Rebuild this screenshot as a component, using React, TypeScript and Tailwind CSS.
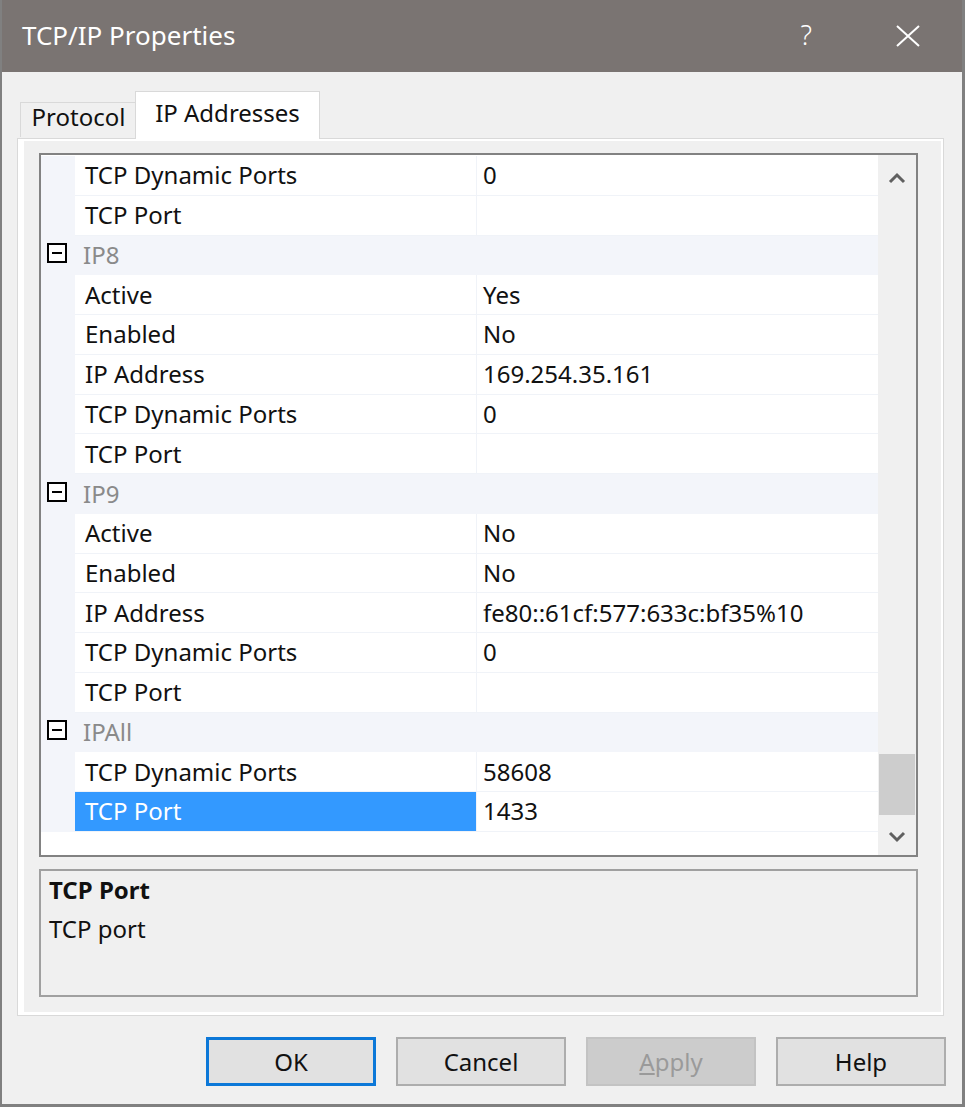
import React from "react";

type Row =
  | { kind: "cat"; label: string }
  | { kind: "prop"; name: string; value: string; selected?: boolean };

const rows: Row[] = [
  { kind: "prop", name: "TCP Dynamic Ports", value: "0" },
  { kind: "prop", name: "TCP Port", value: "" },
  { kind: "cat", label: "IP8" },
  { kind: "prop", name: "Active", value: "Yes" },
  { kind: "prop", name: "Enabled", value: "No" },
  { kind: "prop", name: "IP Address", value: "169.254.35.161" },
  { kind: "prop", name: "TCP Dynamic Ports", value: "0" },
  { kind: "prop", name: "TCP Port", value: "" },
  { kind: "cat", label: "IP9" },
  { kind: "prop", name: "Active", value: "No" },
  { kind: "prop", name: "Enabled", value: "No" },
  { kind: "prop", name: "IP Address", value: "fe80::61cf:577:633c:bf35%10" },
  { kind: "prop", name: "TCP Dynamic Ports", value: "0" },
  { kind: "prop", name: "TCP Port", value: "" },
  { kind: "cat", label: "IPAll" },
  { kind: "prop", name: "TCP Dynamic Ports", value: "58608" },
  { kind: "prop", name: "TCP Port", value: "1433", selected: true },
];

function Expander() {
  return (
    <div className="w-[20px] h-[20px] border-2 border-[#000] bg-white flex items-center justify-center">
      <div className="w-[10px] h-[2px] bg-[#000]" />
    </div>
  );
}

function GridRow({ row }: { row: Row }) {
  if (row.kind === "cat") {
    return (
      <div className="flex h-[39.75px] bg-[#f3f5fa]">
        <div className="w-[34px] flex items-center justify-center pr-[2px] pb-[4px]">
          <Expander />
        </div>
        <div className="flex-1 flex items-center pl-[8px] text-[#8a8a8a]">{row.label}</div>
      </div>
    );
  }
  return (
    <div className="flex h-[39.75px]">
      <div className="w-[34px] bg-[#f3f5fa]" />
      <div
        className={
          row.selected
            ? "w-[401px] flex items-center pl-[10px] bg-[#3399ff] text-white border-b border-[#f0f3f8]"
            : "w-[401px] flex items-center pl-[10px] bg-white text-[#111] border-b border-[#f0f3f8]"
        }
      >
        {row.name}
      </div>
      <div className="flex-1 flex items-center pl-[6px] bg-white text-[#111] border-l border-b border-[#f0f3f8]">
        {row.value}
      </div>
    </div>
  );
}

function Chevron({ up }: { up?: boolean }) {
  return (
    <svg width="18" height="12" viewBox="0 0 18 12">
      <path
        d={up ? "M2 10 L9 3 L16 10" : "M2 2 L9 9 L16 2"}
        fill="none"
        stroke="#606060"
        strokeWidth="3"
      />
    </svg>
  );
}

function Button({
  label,
  variant,
}: {
  label: React.ReactNode;
  variant?: "default" | "disabled";
}) {
  const cls =
    variant === "default"
      ? "w-[170px] h-[49px] flex items-center justify-center bg-[#e1e1e1] border-[3px] border-[#0c78d8] text-[#111]"
      : variant === "disabled"
      ? "w-[170px] h-[49px] flex items-center justify-center bg-[#cccccc] border-2 border-[#c3c3c3] text-[#9a9a9a]"
      : "w-[170px] h-[49px] flex items-center justify-center bg-[#e1e1e1] border-2 border-[#adadad] text-[#111]";
  return <div className={cls}>{label}</div>;
}

export default function App() {
  return (
    <div
      className="w-[965px] h-[1107px] flex flex-col bg-[#f0f0f0] border-l-2 border-r-[3px] border-b-[3px] border-[#808080] text-[24px] leading-none overflow-hidden"
      style={{ fontFamily: '"Noto Sans", "DejaVu Sans", sans-serif' }}
    >
      {/* Title bar */}
      <div className="h-[72px] shrink-0 bg-[#7a7472] flex items-center text-white">
        <div className="pl-[20px] text-[26px] pb-[2px]">TCP/IP Properties</div>
        <div className="ml-auto flex items-center">
          <div className="text-[27px] font-light pb-[4px] mr-[84px]">?</div>
          <svg width="24" height="22" viewBox="0 0 24 22" className="mr-[42px]">
            <path d="M1 1 L23 21 M23 1 L1 21" stroke="white" strokeWidth="2" />
          </svg>
        </div>
      </div>

      {/* Tabs */}
      <div className="flex items-end pl-[18px] mt-[19px] h-[47px] shrink-0 relative z-10">
        <div className="w-[117px] h-[35px] border border-b-0 border-[#d9d9d9] bg-[#f0f0f0] flex items-end justify-center pb-[8px] text-[#111] mb-[1px]">
          Protocol
        </div>
        <div className="w-[185px] h-[48px] -ml-[2px] -mb-[1px] border border-b-0 border-[#d9d9d9] bg-white flex items-end justify-center pb-[14px] text-[#111]">
          IP Addresses
        </div>
      </div>

      {/* Tab panel */}
      <div className="ml-[15px] w-[927px] h-[878px] border border-[#d9d9d9] bg-white">
        <div className="w-full h-full bg-[#f0f0f0] border-l-[6px] border-t-[2px] border-r-[2px] border-b-[3px] border-white pl-[15px] pt-[12px]">
          {/* Property grid */}
          <div className="w-[879px] h-[704px] border-2 border-[#828282] flex bg-white">
            <div className="flex-1 flex flex-col pt-[1px]">
              {rows.map((r, i) => (
                <GridRow key={i} row={r} />
              ))}
            </div>
            <div className="w-[38px] bg-[#f0f0f0] flex flex-col items-center">
              <div className="h-[44px] flex items-center justify-center pt-[2px]">
                <Chevron up />
              </div>
              <div className="flex-1" />
              <div className="w-[36px] h-[61px] bg-[#cdcdcd] mb-[10px]" />
              <div className="h-[24px] flex items-center justify-center mb-[6px]">
                <Chevron />
              </div>
            </div>
          </div>

          {/* Description */}
          <div className="mt-[12px] w-[879px] h-[128px] border-2 border-[#a0a0a0] bg-[#f0f0f0] pl-[8px] pt-[7px] text-[#111]">
            <div className="font-bold">TCP Port</div>
            <div className="mt-[15px]">TCP port</div>
          </div>
        </div>
      </div>

      {/* Buttons */}
      <div className="flex justify-end gap-[20px] pr-[16px] mt-[21px]">
        <Button label="OK" variant="default" />
        <Button label="Cancel" />
        <Button
          label={
            <span>
              <span className="underline">A</span>pply
            </span>
          }
          variant="disabled"
        />
        <Button label="Help" />
      </div>
    </div>
  );
}
